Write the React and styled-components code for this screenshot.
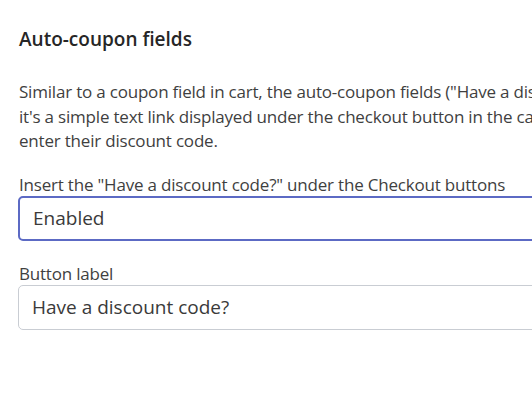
import React from 'react'
import styled, { createGlobalStyle } from 'styled-components'

const Global = createGlobalStyle`
body {
  margin: 0;
  background: #fff;
  font-family: "Open Sans", "Noto Sans", sans-serif;
  color: #3c3c3c;
  overflow: hidden;
}
`

const Panel = styled.div`
  width: 760px;
  padding: 26px 0 0 19px;
  box-sizing: border-box;
`

const Heading = styled.h2`
  margin: 0;
  font-size: 19px;
  font-weight: 600;
  color: #262626;
  line-height: 26px;
`

const Text = styled.p`
  margin: 28px 0 0;
  font-size: 17px;
  line-height: 24.5px;
  letter-spacing: -0.2px;
  color: #3f3f3f;
  white-space: nowrap;
`

const Field = styled.div`
  margin-top: ${p => p.$top}px;
  display: flex;
  flex-direction: column;
`

const Label = styled.label`
  font-size: 17px;
  line-height: 22px;
  letter-spacing: -0.2px;
  color: #3f3f3f;
  white-space: nowrap;
`

const Input = styled.div`
  margin-left: -1px;
  height: 45px;
  box-sizing: border-box;
  display: flex;
  align-items: center;
  padding-left: 13px;
  border: ${p => (p.$focus ? '2px solid #5c6ac4' : '1px solid #c9cdd3')};
  border-radius: 5px;
  font-size: 19px;
  color: #3a3a3a;
  background: #fff;
`

export default function App() {
  return (
    <>
      <Global />
      <Panel>
        <Heading>Auto-coupon fields</Heading>
        <Text>
          Similar to a coupon field in cart, the auto-coupon fields ("Have a discount code?") are optional;
          <br />
          it's a simple text link displayed under the checkout button in the cart, where customers can
          <br />
          enter their discount code.
        </Text>
        <Field $top={20}>
          <Label>Insert the "Have a discount code?" under the Checkout buttons</Label>
          <Input $focus>Enabled</Input>
        </Field>
        <Field $top={22}>
          <Label>Button label</Label>
          <Input>Have a discount code?</Input>
        </Field>
      </Panel>
    </>
  )
}
